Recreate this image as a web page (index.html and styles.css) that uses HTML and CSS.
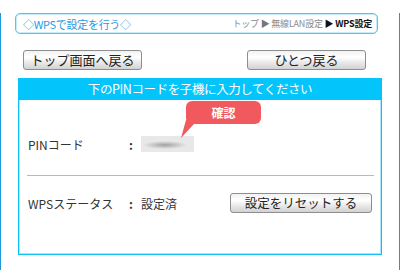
FILE: index.html
```html
<!DOCTYPE html>
<html lang="ja">

<head>
    <meta charset="UTF-8">
    <title>WPS設定</title>
    <link rel="stylesheet" href="styles.css">
</head>

<body>
    <div class="frame">
        <div class="page-head">
            <span class="page-title">◇WPSで設定を行う◇</span>
            <span class="crumbs">トップ <span class="arrow">▶</span> 無線LAN設定 <b>▶ WPS設定</b></span>
        </div>

        <div class="nav">
            <button class="btn btn-nav">トップ画面へ戻る</button>
            <button class="btn btn-nav">ひとつ戻る</button>
        </div>

        <div class="panel">
            <div class="panel-title">下のPINコードを子機に入力してください</div>
            <div class="panel-body">
                <div class="row row-pin">
                    <span class="label">PINコード</span>
                    <span class="colon">:</span>
                    <span class="pin-mask"></span>
                    <div class="bubble">確認</div>
                </div>
                <div class="divider"></div>
                <div class="row row-status">
                    <span class="label">WPSステータス</span>
                    <span class="colon">:</span>
                    <span class="value">設定済</span>
                    <button class="btn btn-reset">設定をリセットする</button>
                </div>
            </div>
        </div>
    </div>
</body>

</html>
```

FILE: styles.css
```css
body {
    margin: 0;
    background: #ffffff;
    font-family: "Noto Sans CJK JP", "Noto Sans", sans-serif;
    color: #222;
}

.frame {
    width: 400px;
    height: 269px;
    box-sizing: border-box;
    border: 1px solid #1e98dc;
    border-top: none;
}

/* page header */
.page-head {
    margin: 13px 0 0 14px;
    width: 363px;
    height: 21px;
    box-sizing: border-box;
    border: 1px solid #55c5f0;
    box-shadow: inset 0 0 0 1px #c4ecfb;
    border-radius: 5px;
    display: flex;
    justify-content: space-between;
    align-items: center;
    padding: 0 5px 0 7px;
}

.page-title {
    font-size: 11px;
    color: #1f9be0;
    letter-spacing: -0.3px;
}

.crumbs {
    font-size: 9px;
    color: #8a8a8a;
    letter-spacing: -0.2px;
}

.crumbs .arrow {
    color: #777;
}

.crumbs b {
    color: #111;
}

/* nav buttons */
.nav {
    margin: 16px 0 0 22px;
    width: 343px;
    display: flex;
    justify-content: space-between;
}

.btn {
    height: 20px;
    box-sizing: border-box;
    border: 1px solid #8e8e8e;
    border-radius: 3px;
    background: linear-gradient(#f2f2f2, #ffffff 35%, #ececec 60%, #d2d2d2);
    font-family: "Noto Sans CJK JP", sans-serif;
    font-size: 13px;
    line-height: 16px;
    color: #222;
    padding: 0;
}

.btn-nav {
    width: 119px;
}

/* panel */
.panel {
    margin: 8px 0 0 17px;
    width: 364px;
}

.panel-title {
    height: 22px;
    line-height: 21px;
    background: #03c5fc;
    color: #ffffff;
    font-size: 12.5px;
    text-align: center;
    letter-spacing: -0.4px;
}

.panel-body {
    height: 155px;
    box-sizing: border-box;
    border: 1px solid #10c0f5;
    border-top: none;
    box-shadow: inset 1px 0 0 #a8e6fb, inset -1px 0 0 #a8e6fb, inset 0 -1px 0 #a8e6fb;
}

.row {
    position: relative;
    display: flex;
    align-items: center;
    padding-left: 9px;
    font-size: 12px;
    color: #333;
}

.row-pin {
    height: 75px;
    box-sizing: border-box;
    padding-top: 13px;
}

.label {
    width: 101px;
}

.colon {
    width: 12px;
    font-weight: bold;
}

.pin-mask {
    width: 53px;
    height: 16px;
    background: radial-gradient(ellipse 22px 4px at 24px 9px, #a0a0a0, #cccccc 60%, #e8e8e8 100%);
    filter: blur(0.5px);
}

.bubble {
    position: absolute;
    left: 167px;
    top: 1px;
    width: 75px;
    height: 23px;
    border-radius: 6px;
    background: #f05a5e;
    color: #ffffff;
    font-size: 12px;
    font-weight: bold;
    line-height: 23px;
    text-align: center;
}

.bubble::after {
    content: "";
    position: absolute;
    left: -5px;
    top: 19px;
    width: 13px;
    height: 18px;
    background: #f05a5e;
    clip-path: polygon(5px 0, 13px 0, 13px 4px, 0 18px);
}

.divider {
    margin: 0 7px 0 8px;
    height: 1px;
    background: #6dd4f6;
}

.row-status {
    margin-top: 17px;
    height: 20px;
    padding-right: 9px;
}

.btn-reset {
    margin-left: auto;
    width: 142px;
    font-size: 12.5px;
}
```
